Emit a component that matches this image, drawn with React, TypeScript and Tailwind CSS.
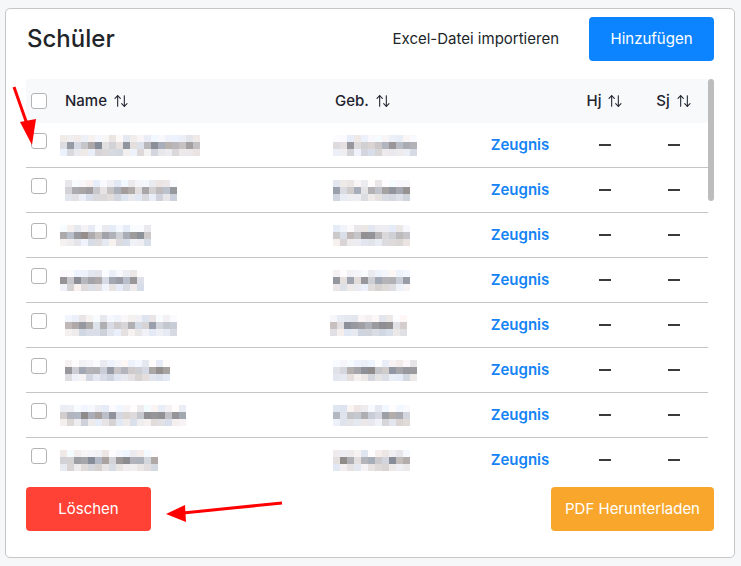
import { ArrowUpDown } from 'lucide-react'

type Student = { name: number; birth: number }

const students: Student[] = [
  { name: 140, birth: 84 },
  { name: 112, birth: 80 },
  { name: 91, birth: 78 },
  { name: 85, birth: 78 },
  { name: 113, birth: 78 },
  { name: 105, birth: 83 },
  { name: 126, birth: 78 },
  { name: 98, birth: 78 },
]

function seeded(seed: number) {
  let s = seed * 9301 + 49297
  return () => {
    s = (s * 9301 + 49297) % 233280
    return s / 233280
  }
}

// pixelated placeholder for blurred personal data
function Mosaic({ width, seed }: { width: number; seed: number }) {
  const rand = seeded(seed)
  const cols = Math.round(width / 7)
  const rows = [
    [228, 27],
    [138, 90],
    [208, 36],
  ]
  return (
    <div className="flex flex-col">
      {rows.map(([base, range], r) => (
        <div key={r} className="flex">
          {Array.from({ length: cols }).map((_, c) => {
            const l = Math.min(252, Math.round(base + rand() * range))
            const warm = Math.round((rand() - 0.5) * 14)
            return (
              <div
                key={c}
                className="h-[7px] w-[7px]"
                style={{ backgroundColor: `rgb(${l + warm},${l},${l - warm + 5})` }}
              />
            )
          })}
        </div>
      ))}
    </div>
  )
}

function SortHead({ label }: { label: string }) {
  return (
    <span className="flex items-center gap-[6px]">
      {label}
      <ArrowUpDown size={16} strokeWidth={1.6} />
    </span>
  )
}

function Checkbox() {
  return <div className="h-[16px] w-[16px] rounded-[3px] border border-[#b4b4b4] bg-white" />
}

const gridCols = 'grid grid-cols-[39px_270px_135px_100px_70px_68px]'

export default function App() {
  return (
    <div
      className="relative min-h-[566px] w-[741px] bg-[#f6f7f9] pl-[5px] pt-2 text-[#212529]"
      style={{ fontFamily: 'Inter, "Noto Sans", sans-serif' }}
    >
      <div className="flex h-[550px] w-[730px] flex-col rounded-[5px] border border-[#c6c6c6] bg-white px-5 pt-2">
        <div className="flex h-[44px] items-center">
          <h1 className="flex-1 pl-px text-[24px] font-medium leading-none">Schüler</h1>
          <button className="mr-[30px] text-[15px] text-[#212529]">Excel-Datei importieren</button>
          <button className="h-[44px] w-[125px] rounded-[4px] bg-[#0d84ff] text-[15px] text-white">Hinzufügen</button>
        </div>

        <div className="relative mt-[18px] h-[393px] overflow-hidden">
          <div className="w-[682px]">
            <div className={`${gridCols} h-[44px] items-center bg-[#f8f9fa] text-[15px] font-medium text-[#1f2430]`}>
              <div className="pl-[5px]">
                <Checkbox />
              </div>
              <SortHead label="Name" />
              <SortHead label="Geb." />
              <div />
              <div className="flex justify-center">
                <SortHead label="Hj" />
              </div>
              <div className="flex justify-center">
                <SortHead label="Sj" />
              </div>
            </div>
            {students.map((s, i) => (
              <div key={i} className={`${gridCols} h-[45px] items-center border-b border-[#c4c4c4]`}>
                <div className="self-start pl-[5px] pt-[10px]">
                  <Checkbox />
                </div>
                <div className={i === 1 || i === 4 || i === 5 ? 'pl-[0px]' : '-ml-[5px]'}>
                  <Mosaic width={s.name} seed={i * 7 + 3} />
                </div>
                <div className={i === 4 ? '-ml-[5px]' : '-ml-[2px]'}>
                  <Mosaic width={s.birth} seed={i * 11 + 5} />
                </div>
                <div className="text-center text-[15px] font-semibold text-[#1483f5]">Zeugnis</div>
                <div className="flex justify-center">
                  <div className="h-[2px] w-[12px] bg-[#3a3a3a]" />
                </div>
                <div className="flex justify-center">
                  <div className="h-[2px] w-[12px] bg-[#3a3a3a]" />
                </div>
              </div>
            ))}
          </div>
          <div className="absolute right-0 top-0 h-[122px] w-[6px] rounded-full bg-[#bdbdbd]" />
        </div>

        <div className="mt-[15px] flex justify-between">
          <button className="h-[44px] w-[125px] rounded-[4px] bg-[#ff4136] text-[15px] text-white">Löschen</button>
          <button className="h-[44px] w-[163px] rounded-[4px] bg-[#f8a72c] text-[15px] text-white">PDF Herunterladen</button>
        </div>
      </div>

      <svg className="pointer-events-none absolute left-0 top-0" width="741" height="566">
        <line x1="14" y1="87" x2="27" y2="124" stroke="#ff0000" strokeWidth="3" />
        <polygon points="20,122 36,119 32,145" fill="#ff0000" />
        <line x1="282" y1="503" x2="183" y2="513" stroke="#ff0000" strokeWidth="3" />
        <polygon points="166,514 185,505 186,522" fill="#ff0000" />
      </svg>
    </div>
  )
}
